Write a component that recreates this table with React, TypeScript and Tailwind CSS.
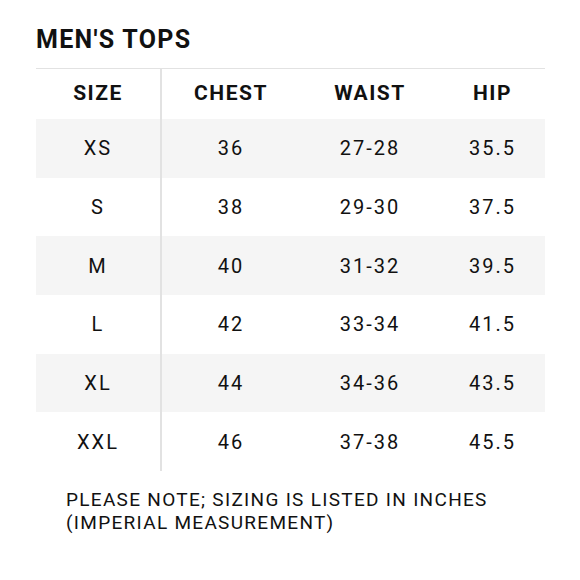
const rows = [
  { size: "XS", chest: "36", waist: "27-28", hip: "35.5" },
  { size: "S", chest: "38", waist: "29-30", hip: "37.5" },
  { size: "M", chest: "40", waist: "31-32", hip: "39.5" },
  { size: "L", chest: "42", waist: "33-34", hip: "41.5" },
  { size: "XL", chest: "44", waist: "34-36", hip: "43.5" },
  { size: "XXL", chest: "46", waist: "37-38", hip: "45.5" },
];

const App = () => {
  return (
    <div className="w-[580px] h-[580px] bg-white text-[#111] font-['Roboto',sans-serif] pl-[36px] pr-[35px] pt-[26px]">
      <h1 className="font-bold text-[25px] leading-[28px] tracking-[1.3px] h-[42px]">MEN'S TOPS</h1>

      <div className="border-t border-[#e2e2e2]">
        <div className="flex h-[50px] items-center font-bold text-[21px] tracking-[1.5px]">
          <div className="w-[126px] h-full flex items-center justify-center border-r-2 border-[#e2e2e2]">SIZE</div>
          <div className="w-[138px] text-center">CHEST</div>
          <div className="w-[140px] text-center">WAIST</div>
          <div className="flex-1 text-center">HIP</div>
        </div>

        {rows.map((row, i) => (
          <div key={row.size} className={`flex h-[58.7px] items-center text-[20px] tracking-[2px] ${i % 2 == 0 ? "bg-[#f5f5f5]" : "bg-white"}`}>
            <div className="w-[126px] h-full flex items-center justify-center border-r-2 border-[#e2e2e2]">{row.size}</div>
            <div className="w-[138px] text-center">{row.chest}</div>
            <div className="w-[140px] text-center">{row.waist}</div>
            <div className="flex-1 text-center">{row.hip}</div>
          </div>
        ))}
      </div>

      <p className="mt-[17px] ml-[30px] text-[19px] leading-[23px] tracking-[1.3px]">
        PLEASE NOTE; SIZING IS LISTED IN INCHES
        <br />
        (IMPERIAL MEASUREMENT)
      </p>
    </div>
  );
};

export default App;
